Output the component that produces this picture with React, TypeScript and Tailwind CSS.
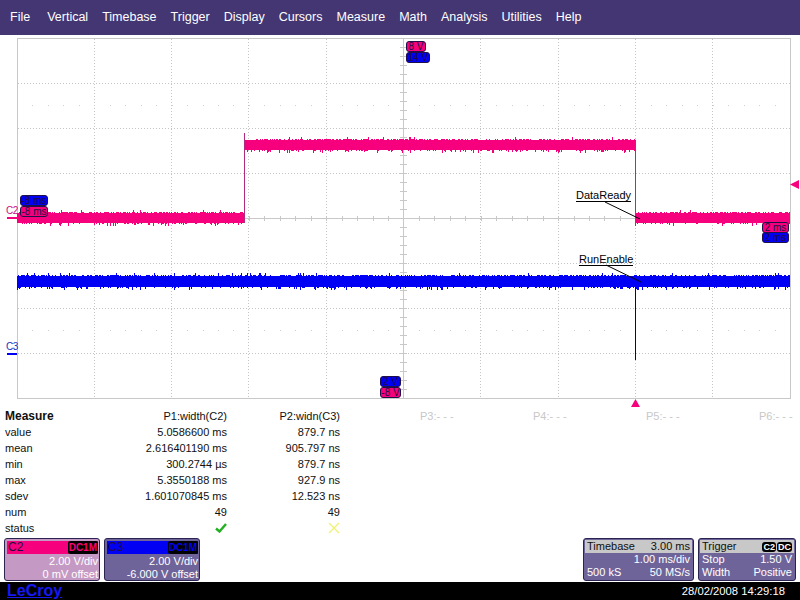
const menu = ["Vertical", "Timebase", "Trigger", "Display", "Cursors", "Measure", "Math", "Analysis", "Utilities", "Help"];

const PINK = "#f7007d";
const BLUE = "#0000f5";

const vLines = [94, 171, 248, 326, 480, 558, 635, 712];
const hLines = [83, 128, 173, 263, 308, 353];

// seeded so the noise stays the same from run to run
function makeRand(seed: number) {
  let s = seed;
  return () => {
    s = (s * 16807) % 2147483647;
    return s / 2147483647;
  };
}

// solid trace band, spikes above and below it go in a second path
function spikes(x0: number, x1: number, top: number, bottom: number, seed: number) {
  const r = makeRand(seed);
  let d = "";
  for (let x = x0; x < x1; x++) {
    const up = r();
    const down = r();
    if (up > 0.5) d += `M${x + 0.5} ${top}V${top - 1 - (up > 0.97 ? 2 : 0)}`;
    if (down > 0.7) d += `M${x + 0.5} ${bottom}V${bottom + 1 + (down > 0.96 ? 2 : down > 0.88 ? 1 : 0)}`;
  }
  return d;
}

function Trace({ x0, x1, top, bottom, seed, color }: { x0: number; x1: number; top: number; bottom: number; seed: number; color: string }) {
  return (
    <>
      <rect x={x0} y={top} width={x1 - x0} height={bottom - top} fill={color} />
      <path d={spikes(x0, x1, top, bottom, seed)} stroke={color} fill="none" />
    </>
  );
}

function range(from: number, to: number, step: number) {
  const out: number[] = [];
  for (let v = from; v <= to; v += step) out.push(v);
  return out;
}

function Screen() {
  const minorX = range(17, 790, 15.46);
  const minorY = range(38, 398, 9);
  return (
    <svg className="absolute inset-0 overflow-visible" width={800} height={370} viewBox="0 35 800 370" shapeRendering="crispEdges">
      {vLines.map((x) => (
        <line key={x} x1={x + 0.5} x2={x + 0.5} y1={39} y2={398} stroke="#c4c4c4" strokeDasharray="1 2" />
      ))}
      {hLines.map((y) => (
        <line key={y} x1={18} x2={790} y1={y + 0.5} y2={y + 0.5} stroke="#c4c4c4" strokeDasharray="1 2" />
      ))}
      {[105, 330].map((y) =>
        minorX.map((x) => <rect key={`${y}-${x}`} x={Math.round(x)} y={y} width={1} height={1} fill="#d0d0d0" />),
      )}
      <rect x={18} y={218} width={772} height={1} fill="#c8c8c8" />
      <rect x={403} y={39} width={1} height={359} fill="#c8c8c8" />
      {minorX.map((x) => (
        <rect key={x} x={Math.round(x)} y={216} width={1} height={5} fill="#c8c8c8" />
      ))}
      {minorY.map((y) => (
        <rect key={y} x={400} y={y} width={7} height={1} fill="#c8c8c8" />
      ))}
      <rect x={17.5} y={38.5} width={773} height={360} fill="none" stroke="#c8c8c8" strokeWidth={1} />
      <rect x={17} y={38} width={1} height={361} fill="#c8c8c8" />

      <Trace x0={17} x1={245} top={213} bottom={223} seed={11} color={PINK} />
      <Trace x0={245} x1={636} top={140} bottom={150} seed={27} color={PINK} />
      <Trace x0={636} x1={790} top={213} bottom={223} seed={43} color={PINK} />
      <Trace x0={17} x1={790} top={276} bottom={287} seed={91} color={BLUE} />
      <rect x={244} y={133} width={1} height={90} fill="#b02a80" />
      <rect x={635} y={140} width={1} height={86} fill="#b02a80" />
      <rect x={635} y={287} width={1} height={73} fill="#000080" />

      <line x1={605} y1={202} x2={640} y2={219} stroke="#000" shapeRendering="auto" />
      <line x1={606} y1={265} x2={641} y2={282} stroke="#000" shapeRendering="auto" />

      <path d="M790 184.5L799 180V189Z" fill={PINK} shapeRendering="auto" />
      <path d="M635.5 399L640 407H631Z" fill={PINK} shapeRendering="auto" />
      <rect x={7} y={217} width={10} height={2} fill={PINK} />
      <rect x={7} y={353} width={10} height={2} fill={BLUE} />
    </svg>
  );
}

function Badge({ text, color, className }: { text: string; color: "pink" | "blue"; className: string }) {
  return (
    <div
      className={`absolute flex h-[11px] items-center justify-center overflow-hidden whitespace-nowrap rounded-[3px] border border-[#20104a] text-[10px] leading-none text-[#200a40] ${
        color === "pink" ? "bg-[#f7007d]" : "bg-[#0000f5]"
      } ${className}`}
    >
      {text}
    </div>
  );
}

function Label({ text, className }: { text: string; className: string }) {
  return <div className={`absolute border-b border-black text-[11px] leading-[11px] text-black ${className}`}>{text}</div>;
}

const rows = [
  ["value", "5.0586600 ms", "879.7 ns"],
  ["mean", "2.616401190 ms", "905.797 ns"],
  ["min", "300.2744 µs", "879.7 ns"],
  ["max", "5.3550188 ms", "927.9 ns"],
  ["sdev", "1.601070845 ms", "12.523 ns"],
  ["num", "49", "49"],
];

function Measure() {
  return (
    <div className="grid h-[131px] grid-cols-[110px_112px_113px_1fr] auto-rows-[16px] pl-[5px] pt-[3px] text-[11px] leading-[16px] text-[#101010]">
      <div className="text-[12px] font-bold">Measure</div>
      <div className="text-right">P1:width(C2)</div>
      <div className="text-right">P2:widn(C3)</div>
      <div className="flex pl-[80px] text-[#c8c8c8]">
        {["P3", "P4", "P5", "P6"].map((p) => (
          <div key={p} className="w-[113px] shrink-0">
            {p}:- - -
          </div>
        ))}
      </div>
      {rows.map((r) => (
        <div key={r[0]} className="col-span-4 grid grid-cols-subgrid">
          <div>{r[0]}</div>
          <div className="text-right">{r[1]}</div>
          <div className="text-right">{r[2]}</div>
        </div>
      ))}
      <div>status</div>
      <div className="flex items-center justify-end">
        <svg width={12} height={10} viewBox="0 0 12 10">
          <path d="M1 5.5L4.5 8.5L11 1" fill="none" stroke="#20b020" strokeWidth={2.4} />
        </svg>
      </div>
      <div className="flex items-center justify-end">
        <svg width={12} height={12} viewBox="0 0 12 12">
          <path d="M1 1L11 11M11 1L1 11" fill="none" stroke="#f0f070" strokeWidth={1.2} />
        </svg>
      </div>
    </div>
  );
}

function ChannelPanel({ name, offset, active }: { name: string; offset: string; active: boolean }) {
  return (
    <div
      className={`flex h-[43px] w-[96px] flex-col rounded-[3px] border border-[#2c2450] p-[2px] pr-[1px] text-right text-[11px] leading-[13px] text-white ${
        active ? "bg-[#c49ac4]" : "bg-[#6f6499]"
      }`}
    >
      <div
        className={`flex h-[13px] items-center justify-between pl-[1px] text-[12px] text-[#200a40] ${
          active ? "bg-[#f7007d]" : "bg-[#0000f5]"
        }`}
      >
        <span>{name}</span>
        <span className={`rounded-[2px] bg-black px-[1px] text-[10px] font-bold ${active ? "text-[#f7007d]" : "text-[#0000f5]"}`}>
          DC1M
        </span>
      </div>
      <div className="mt-[1px]">2.00 V/div</div>
      <div>{offset}</div>
    </div>
  );
}

function InfoPanel({ width, children }: { width: string; children: React.ReactNode }) {
  return (
    <div className={`flex h-[43px] flex-col rounded-[3px] border border-[#2c2450] bg-[#6f6499] p-[1px] text-[11px] leading-[13px] text-white ${width}`}>
      {children}
    </div>
  );
}

function InfoRow({ left, right }: { left?: string; right: string }) {
  return (
    <div className="flex h-[13px] justify-between px-[2px]">
      <span>{left}</span>
      <span>{right}</span>
    </div>
  );
}

function TrigTag({ text }: { text: string }) {
  return <span className="rounded-[3px] bg-black px-[1px] text-[9px] font-bold leading-[10px] text-white">{text}</span>;
}

export default function App() {
  return (
    <div className="flex h-[600px] w-[800px] flex-col overflow-hidden bg-white font-['Liberation_Sans',Arial,sans-serif]">
      <div className="flex h-[35px] shrink-0 items-center gap-[14px] bg-[#433672] pl-[10px] text-[12.5px] text-white">
        <span className="mr-[3px]">File</span>
        {menu.map((m) => (
          <span key={m}>{m}</span>
        ))}
      </div>

      <div className="relative h-[370px] shrink-0">
        <Screen />
        <Badge text="8 V" color="pink" className="left-[406px] top-[6px] w-[20px]" />
        <Badge text="14 V" color="blue" className="left-[406px] top-[17px] w-[24px]" />
        <Badge text="-8 ms" color="blue" className="left-[20px] top-[160px] w-[28px]" />
        <Badge text="-8 ms" color="pink" className="left-[20px] top-[171px] w-[28px]" />
        <Badge text="2 ms" color="pink" className="left-[762px] top-[187px] w-[27px]" />
        <Badge text="2 ms" color="blue" className="left-[762px] top-[197px] w-[27px]" />
        <Badge text="2 V" color="blue" className="left-[380px] top-[341px] w-[21px]" />
        <Badge text="-8 V" color="pink" className="left-[380px] top-[352px] w-[21px]" />
        <div className="absolute left-[6px] top-[170px] text-[10px] leading-[12px] tracking-[-0.5px] text-[#c8107d]">C2</div>
        <div className="absolute left-[6px] top-[306px] text-[10px] leading-[12px] tracking-[-0.5px] text-[#2030c0]">C3</div>
        <Label text="DataReady" className="left-[576px] top-[155px]" />
        <Label text="RunEnable" className="left-[579px] top-[219px]" />
      </div>

      <Measure />

      <div className="flex h-[46px] shrink-0 justify-between px-[4px] pt-[2px]">
        <div className="flex gap-[4px]">
          <ChannelPanel name="C2" offset="0 mV offset" active />
          <ChannelPanel name="C3" offset="-6.000 V offset" active={false} />
        </div>
        <div className="flex gap-[4px]">
          <InfoPanel width="w-[111px]">
            <div className="flex h-[13px] justify-between bg-[#c8c8c8] px-[2px] text-[#101010]">
              <span>Timebase</span>
              <span>3.00 ms</span>
            </div>
            <InfoRow right="1.00 ms/div" />
            <InfoRow left="500 kS" right="50 MS/s" />
          </InfoPanel>
          <InfoPanel width="w-[98px]">
            <div className="flex h-[13px] items-center justify-between bg-[#c8c8c8] px-[2px] text-[#101010]">
              <span>Trigger</span>
              <span className="flex gap-[1px]">
                <TrigTag text="C2" />
                <TrigTag text="DC" />
              </span>
            </div>
            <InfoRow left="Stop" right="1.50 V" />
            <InfoRow left="Width" right="Positive" />
          </InfoPanel>
        </div>
      </div>

      <div className="flex h-[18px] shrink-0 items-center justify-between bg-black pl-[7px] pr-[15px]">
        <span className="text-[16px] font-bold leading-[18px] text-[#1818f0] underline">LeCroy</span>
        <span className="text-[11.25px] text-white">28/02/2008 14:29:18</span>
      </div>
    </div>
  );
}
